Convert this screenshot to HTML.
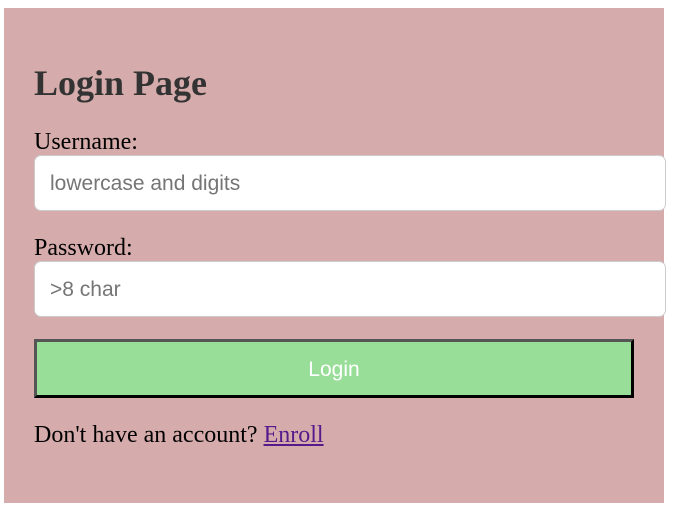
<!DOCTYPE html>
<html><head><style>
body{margin:0;background:#fff;width:677px;height:511px;position:relative;overflow:hidden;font-family:"Liberation Serif",serif;}
.box{position:absolute;left:4px;top:8px;width:660px;height:495px;background:#d5abab;}
.a{position:absolute;}
h1{position:absolute;left:34px;top:63px;margin:0;font-size:36px;font-weight:bold;color:#333;line-height:40px;}
.lab{font-size:24px;color:#000;line-height:26px;}
.inp{box-sizing:border-box;background:#fff;border:1px solid #ccc;border-radius:7px;width:632px;height:56px;left:34px;font-family:"Liberation Sans",sans-serif;font-size:21px;color:#757575;padding-left:15px;line-height:55px;}
.btn{box-sizing:border-box;left:34px;top:339px;width:600px;height:59px;background:#98de98;border:3px solid;border-color:#555 #000 #000 #555;color:#fff;font-family:"Liberation Sans",sans-serif;font-size:21px;text-align:center;line-height:55px;}
.f{left:34px;top:422px;font-size:24px;line-height:26px;color:#000;}
.f span{color:#551a8b;text-decoration:underline;}
</style></head><body>
<div class="box"></div>
<h1>Login Page</h1>
<div class="a lab" style="left:34px;top:129px">Username:</div>
<div class="a inp" style="top:155px">lowercase and digits</div>
<div class="a lab" style="left:34px;top:235px">Password:</div>
<div class="a inp" style="top:261px">&gt;8 char</div>
<div class="a btn">Login</div>
<div class="a f">Don't have an account? <span>Enroll</span></div>
</body></html>
